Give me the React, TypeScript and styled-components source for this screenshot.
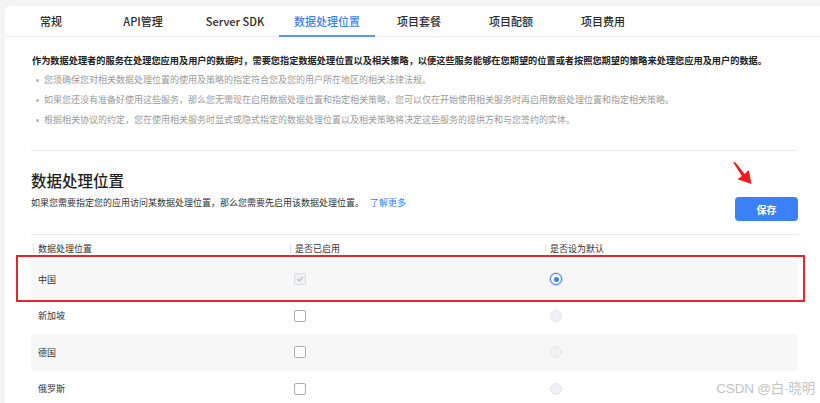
import React from 'react';
import styled, { createGlobalStyle } from 'styled-components';

const GlobalStyle = createGlobalStyle`
    html, body {
        margin: 0;
        padding: 0;
        background: #f4f4f5;
        overflow: hidden;
    }
    body {
        font-family: "Noto Sans CJK SC", "Noto Sans", "Liberation Sans", sans-serif;
        color: #333;
    }
`;

const Page = styled.div`
    position: relative;
    width: 820px;
    height: 403px;
    padding: 6px 0 0 5px;
    box-sizing: border-box;
    overflow: hidden;
`;

const Card = styled.div`
    background: #fff;
    border-top-left-radius: 6px;
    min-height: 420px;
`;

const TabBar = styled.div`
    display: flex;
    height: 30px;
    border-bottom: 1px solid #ebebed;
`;

const Tab = styled.div<{ $active?: boolean }>`
    position: relative;
    width: 92px;
    display: flex;
    align-items: center;
    justify-content: center;
    font-size: 11px;
    font-weight: 500;
    color: ${p => (p.$active ? '#3b7ff5' : '#2a2a2a')};
    &::after {
        content: '';
        display: ${p => (p.$active ? 'block' : 'none')};
        position: absolute;
        left: -2px;
        right: -2px;
        bottom: -1px;
        height: 2px;
        background: #5b93f7;
    }
`;

const Content = styled.div`
    padding: 13px 22px 0 26px;
`;

const Intro = styled.div`
    padding-bottom: 20px;
    border-bottom: 1px solid #ebebed;
`;

const Lead = styled.div`
    font-size: 9.2px;
    line-height: 20px;
    font-weight: 700;
    color: #222;
    padding-left: 1px;
    white-space: nowrap;
`;

const Bullets = styled.ul`
    margin: 0;
    padding: 0;
    list-style: none;
`;

const Bullet = styled.li`
    position: relative;
    font-size: 9px;
    line-height: 20px;
    color: #9a9a9a;
    padding-left: 13px;
    white-space: nowrap;
    &::before {
        content: '';
        position: absolute;
        left: 5px;
        top: 9px;
        width: 3px;
        height: 3px;
        border-radius: 50%;
        background: #b5b5b5;
    }
`;

const Head = styled.div`
    position: relative;
    display: flex;
    justify-content: space-between;
    align-items: flex-start;
    height: 83px;
    padding-top: 18px;
    box-sizing: border-box;
`;

const Title = styled.h2`
    margin: 0;
    font-size: 15.5px;
    line-height: 22px;
    font-weight: 500;
    color: #1f1f1f;
`;

const Subtitle = styled.div`
    margin-top: 5px;
    font-size: 9px;
    line-height: 14px;
    color: #333;
    white-space: nowrap;
`;

const Link = styled.a`
    color: #3b7ff5;
    margin-left: 6px;
    text-decoration: none;
`;

const SaveButton = styled.button`
    margin-top: 28px;
    width: 63px;
    height: 24px;
    border: none;
    border-radius: 4px;
    background: #3a80f6;
    color: #fff;
    font-family: inherit;
    font-size: 10px;
    font-weight: 700;
`;

const Arrow = styled.svg`
    position: absolute;
    left: 701px;
    top: 10px;
`;

const Table = styled.div`
    border-top: 1px solid #ebebed;
`;

const Row = styled.div<{ $striped?: boolean; $header?: boolean }>`
    position: relative;
    display: grid;
    grid-template-columns: 257px 255px 1fr;
    padding-left: 2px;
    height: ${p => (p.$header ? '26px' : '36.5px')};
    background: ${p => (p.$striped ? '#f7f7f8' : '#fff')};
    font-size: 9px;
    color: #333;
`;

const Cell = styled.div<{ $divider?: boolean }>`
    display: flex;
    align-items: center;
    padding-left: 5px;
    position: relative;
    &::before {
        content: '';
        display: ${p => (p.$divider ? 'block' : 'none')};
        position: absolute;
        left: 0;
        top: 9px;
        width: 1px;
        height: 9px;
        background: #e2e2e4;
    }
`;

const CheckBox = styled.span<{ $disabled?: boolean }>`
    display: inline-flex;
    align-items: center;
    justify-content: center;
    width: 10px;
    height: 10px;
    border-radius: 2px;
    border: 1px solid ${p => (p.$disabled ? '#dcdde0' : '#adadb1')};
    background: ${p => (p.$disabled ? '#f0f1f3' : '#fff')};
    margin-left: -1px;
`;

const Radio = styled.span<{ $checked?: boolean; $disabled?: boolean }>`
    display: inline-flex;
    align-items: center;
    justify-content: center;
    width: 10px;
    height: 10px;
    border-radius: 50%;
    box-sizing: content-box;
    border: 1px solid ${p => (p.$checked ? '#3a80f6' : '#e4e6ea')};
    background: ${p => (p.$disabled ? '#eff1f4' : '#fff')};
    box-shadow: ${p => (p.$checked ? '0 0 0 1px rgba(58,128,246,0.25)' : 'none')};
    &::after {
        content: '';
        display: ${p => (p.$checked ? 'block' : 'none')};
        width: 5px;
        height: 5px;
        border-radius: 50%;
        background: #3a80f6;
    }
`;

const Highlight = styled.div`
    position: absolute;
    z-index: 2;
    left: -15px;
    right: -7px;
    top: -6px;
    bottom: -4px;
    border: 2px solid #e8262a;
    pointer-events: none;
`;

const Watermark = styled.div`
    position: absolute;
    right: 5px;
    bottom: 6px;
    font-family: "Liberation Sans", "Noto Sans CJK SC", sans-serif;
    font-size: 13.5px;
    color: #c4c4c4;
    letter-spacing: -0.2px;
`;

const tabs = ['常规', 'API管理', 'Server SDK', '数据处理位置', '项目套餐', '项目配额', '项目费用'];

const regions = [
    { name: '中国', enabled: true, isDefault: true },
    { name: '新加坡', enabled: false, isDefault: false },
    { name: '德国', enabled: false, isDefault: false },
    { name: '俄罗斯', enabled: false, isDefault: false },
];

const Check: React.FC = () => (
    <svg width="8" height="8" viewBox="0 0 8 8">
        <path d="M1.3 4.2 L3.2 6 L6.8 2.2" fill="none" stroke="#b3b5ba" strokeWidth="1.1" />
    </svg>
);

const App: React.FC = () => {
    return (
        <Page>
            <GlobalStyle />
            <Card>
                <TabBar>
                    {tabs.map(t => (
                        <Tab key={t} $active={t === '数据处理位置'}>{t}</Tab>
                    ))}
                </TabBar>
                <Content>
                    <Intro>
                        <Lead>作为数据处理者的服务在处理您应用及用户的数据时，需要您指定数据处理位置以及相关策略，以便这些服务能够在您期望的位置或者按照您期望的策略来处理您应用及用户的数据。</Lead>
                        <Bullets>
                            <Bullet>您须确保您对相关数据处理位置的使用及策略的指定符合您及您的用户所在地区的相关法律法规。</Bullet>
                            <Bullet>如果您还没有准备好使用这些服务，那么您无需现在启用数据处理位置和指定相关策略，您可以仅在开始使用相关服务时再启用数据处理位置和指定相关策略。</Bullet>
                            <Bullet>根据相关协议的约定，您在使用相关服务时显式或隐式指定的数据处理位置以及相关策略将决定这些服务的提供方和与您签约的实体。</Bullet>
                        </Bullets>
                    </Intro>
                    <Head>
                        <div>
                            <Title>数据处理位置</Title>
                            <Subtitle>
                                如果您需要指定您的应用访问某数据处理位置，那么您需要先启用该数据处理位置。
                                <Link>了解更多</Link>
                            </Subtitle>
                        </div>
                        <SaveButton>保存</SaveButton>
                        <Arrow width="22" height="24" viewBox="0 0 22 24">
                            <path d="M1 1 L3.6 1.6 L12.6 13 L16.8 9 L19.5 23 L5.5 18.2 L9.8 15 Z" fill="#f01c1c" />
                        </Arrow>
                    </Head>
                    <Table>
                        <Row $header>
                            <Cell $divider>数据处理位置</Cell>
                            <Cell $divider>是否已启用</Cell>
                            <Cell $divider>是否设为默认</Cell>
                        </Row>
                        {regions.map((r, i) => (
                            <Row key={r.name} $striped={i % 2 === 0}>
                                <Cell>{r.name}</Cell>
                                <Cell>
                                    <CheckBox $disabled={r.enabled}>
                                        {r.enabled && <Check />}
                                    </CheckBox>
                                </Cell>
                                <Cell>
                                    <Radio $checked={r.isDefault} $disabled={!r.isDefault} />
                                </Cell>
                                {i === 0 && <Highlight />}
                            </Row>
                        ))}
                    </Table>
                </Content>
            </Card>
            <Watermark>CSDN @白·晓明</Watermark>
        </Page>
    );
};

export default App;
